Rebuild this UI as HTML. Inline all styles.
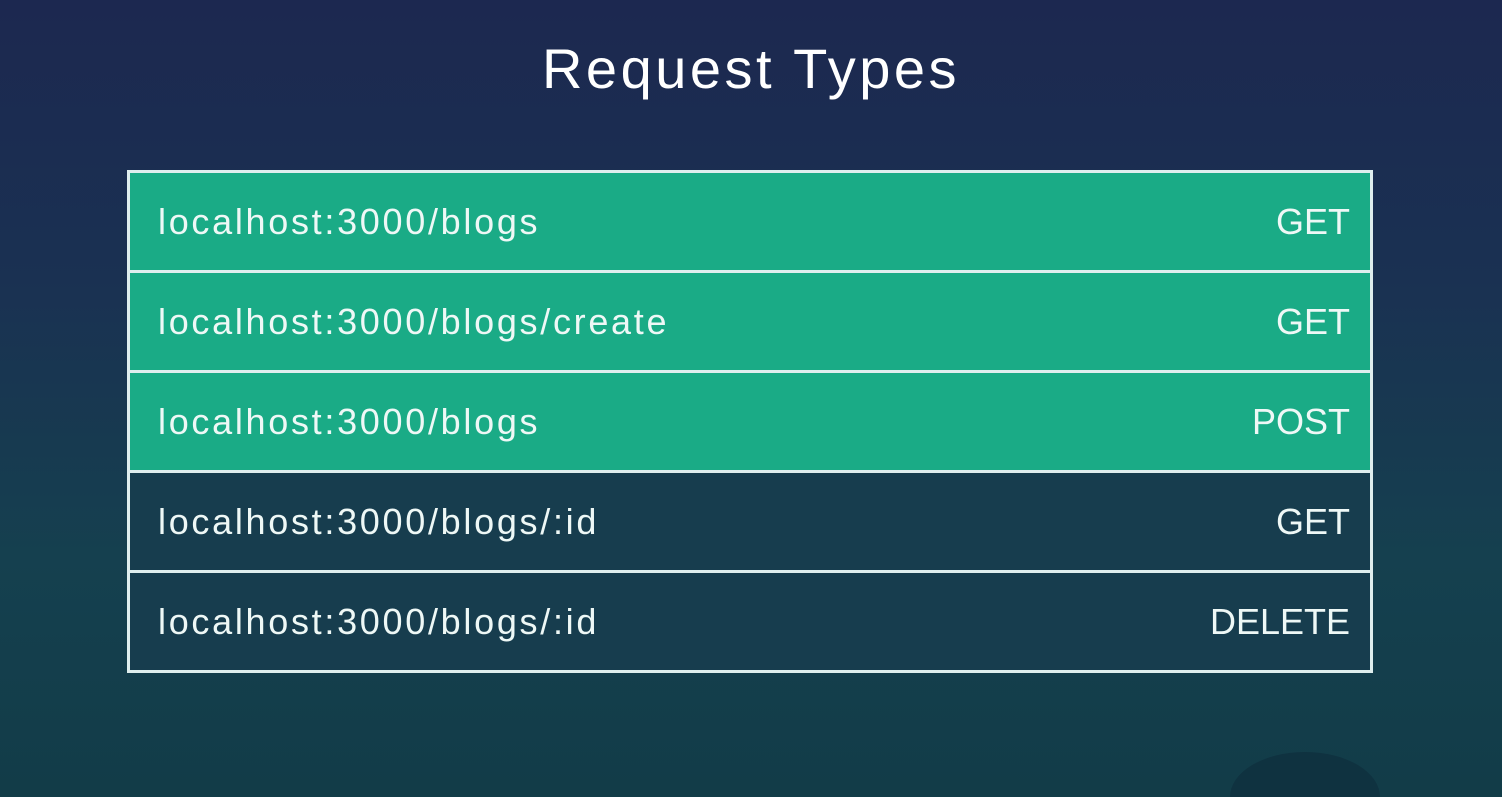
<!DOCTYPE html>
<html><head><style>
html,body{margin:0;width:1502px;height:797px;overflow:hidden}
body{background:linear-gradient(180deg,#1c2850 0%,#1a3152 35%,#15404f 70%,#123c48 100%);font-family:"Liberation Sans",sans-serif;position:relative}
h1{position:absolute;top:36px;left:0;width:1502px;text-align:center;margin:0;color:#fff;font-weight:normal;font-size:56px;letter-spacing:3.5px}
.t{position:absolute;left:127px;top:170px;width:1240px;border:3px solid #dfeeee;border-bottom:none}
.r{height:97px;border-bottom:3px solid #dfeeee;display:flex;justify-content:space-between;align-items:center;padding:0 20px 0 28px;color:#eef8f6;font-size:36px}
.r span:first-child{letter-spacing:2.7px}
.g{background:#1aab86}
.d{background:#173d4e}
.circ{position:absolute;left:1230px;top:752px;width:150px;height:45px;border-radius:75px 75px 0 0/45px 45px 0 0;background:#0f3240}
</style></head><body>
<h1>Request Types</h1>
<div class="t">
<div class="r g"><span>localhost:3000/blogs</span><span>GET</span></div>
<div class="r g"><span>localhost:3000/blogs/create</span><span>GET</span></div>
<div class="r g"><span>localhost:3000/blogs</span><span>POST</span></div>
<div class="r d"><span>localhost:3000/blogs/:id</span><span>GET</span></div>
<div class="r d"><span>localhost:3000/blogs/:id</span><span>DELETE</span></div>
</div>
<div class="circ"></div>
</body></html>
